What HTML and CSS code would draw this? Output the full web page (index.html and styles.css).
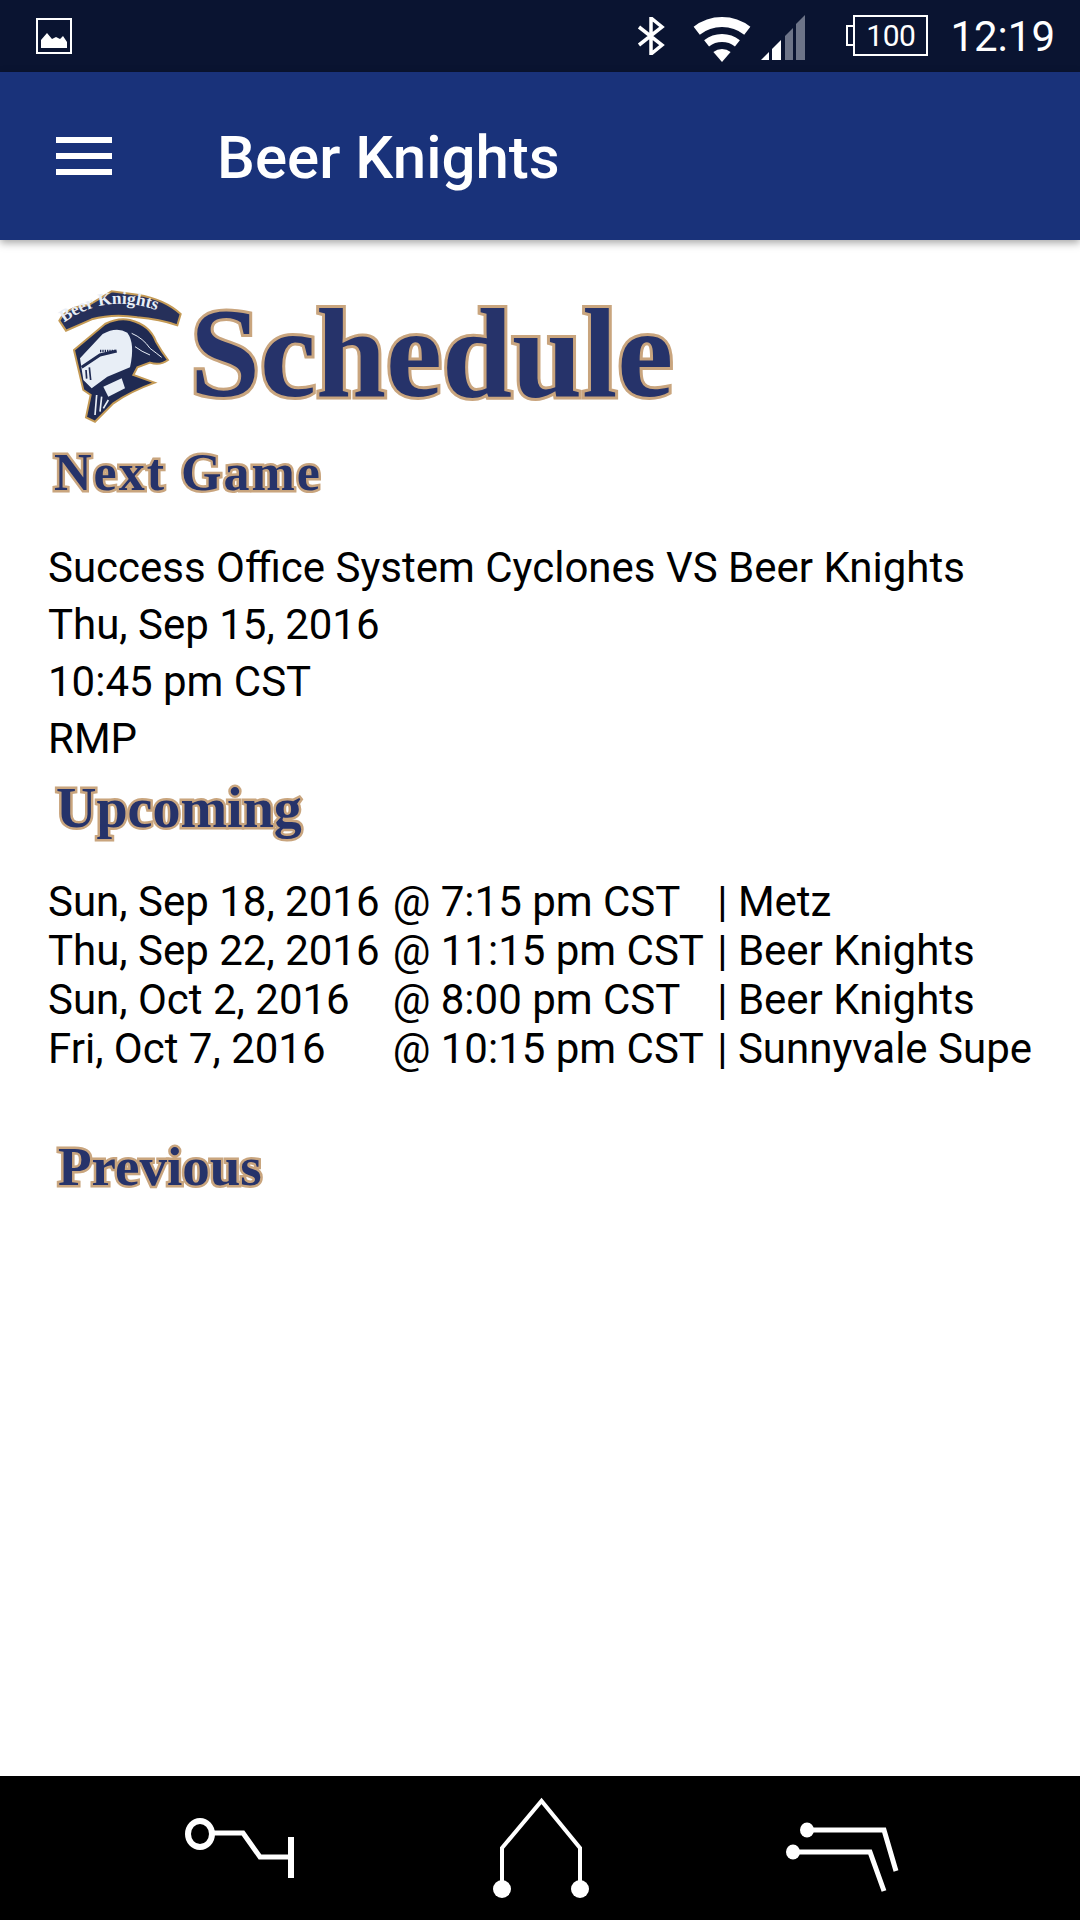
FILE: index.html
```html
<!DOCTYPE html>
<html lang="en">
<head>
    <meta charset="UTF-8">
    <meta name="viewport" content="width=device-width, initial-scale=1.0">
    <title>Beer Knights</title>
    <link rel="stylesheet" href="styles.css">
</head>
<body>
    <div class="status-bar">
        <svg class="status-picture" width="36" height="36" viewBox="0 0 36 36">
            <rect x="1" y="1" width="34" height="34" fill="none" stroke="#fff" stroke-width="2"/>
            <path d="M5 30V22L11 15L16 21L20 19L24 21L27 18L31 24V30Z" fill="#fff"/>
        </svg>
        <svg class="status-bluetooth" width="28" height="38" viewBox="0 0 28 38">
            <path d="M2 10L25 28L14 37V1L25 10L2 28" fill="none" stroke="#fff" stroke-width="3.5"/>
        </svg>
        <svg class="status-wifi" width="60" height="48" viewBox="0 0 60 48">
            <path d="M4.7 15.7A41 41 0 0 1 55.3 15.7" fill="none" stroke="#fff" stroke-width="10"/>
            <path d="M14.6 28.3A25 25 0 0 1 45.4 28.3" fill="none" stroke="#fff" stroke-width="8"/>
            <path d="M30 47L21.4 37A14 14 0 0 1 38.6 37Z" fill="#fff"/>
        </svg>
        <svg class="status-signal" width="44" height="45" viewBox="0 0 44 45">
            <polygon points="0,45 8,37 8,45" fill="#fff"/>
            <polygon points="11,34 20,25 20,45 11,45" fill="#fff"/>
            <polygon points="24,21 32,13 32,45 24,45" fill="#6d7488"/>
            <polygon points="35,9 44,0 44,45 35,45" fill="#6d7488"/>
        </svg>
        <div class="battery">100</div>
        <div class="clock">12:19</div>
    </div>

    <header class="app-bar">
        <div class="menu-icon"><span></span><span></span><span></span></div>
        <div class="app-title">Beer Knights</div>
    </header>

    <main class="content">
        <div class="schedule-head">
            <svg class="logo" width="140" height="150" viewBox="0 0 420 450">
                <defs>
                    <path id="bannerCurve" d="M42 128Q190 20 385 118"/>
                </defs>
                <path d="M28 122Q50 80 115 76L185 34L262 44Q345 58 392 102L382 136Q330 118 262 112Q190 100 125 118L48 152Z" fill="#26305a" stroke="#c49a55" stroke-width="6"/>
                <text class="logo-text"><textPath href="#bannerCurve">Beer Knights</textPath></text>
                <path d="M72 210L165 132Q205 112 240 120Q300 135 318 185Q335 215 354 240Q330 258 300 248L262 262L250 285L314 308Q240 335 190 370Q165 395 135 425L108 412L122 345L100 330Z" fill="#1f2a52" stroke="#c49a55" stroke-width="6"/>
                <path d="M90 235L158 162Q200 138 232 158Q256 190 240 262L172 290L125 325L100 300Z" fill="#e8eef6"/>
                <path d="M95 262L150 225L200 213" fill="none" stroke="#1f2a52" stroke-width="9"/>
                <path d="M150 213H198" fill="none" stroke="#1f2a52" stroke-width="7" stroke-dasharray="4 3"/>
                <path d="M118 262L122 300M108 270L110 296" fill="none" stroke="#1f2a52" stroke-width="5"/>
                <path d="M245 160Q280 175 300 205Q320 220 335 232M255 200Q275 215 300 225" fill="none" stroke="#e8eef6" stroke-width="3"/>
                <path d="M160 320L215 295L225 325L175 350Z" fill="#e8eef6"/>
                <path d="M140 345L135 405M155 350L150 395M175 360L160 385" fill="none" stroke="#e8eef6" stroke-width="5"/>
            </svg>
            <h1 class="title-big">Schedule</h1>
        </div>

        <h2 class="title-small title-next">Next Game</h2>
        <div class="next-game">
            <div>Success Office System Cyclones VS Beer Knights</div>
            <div>Thu, Sep 15, 2016</div>
            <div>10:45 pm CST</div>
            <div>RMP</div>
        </div>

        <h2 class="title-small title-upcoming">Upcoming</h2>
        <table class="upcoming">
            <tr><td class="col-date">Sun, Sep 18, 2016</td><td class="col-time">@ 7:15 pm CST</td><td>| Metz</td></tr>
            <tr><td class="col-date">Thu, Sep 22, 2016</td><td class="col-time">@ 11:15 pm CST</td><td>| Beer Knights</td></tr>
            <tr><td class="col-date">Sun, Oct 2, 2016</td><td class="col-time">@ 8:00 pm CST</td><td>| Beer Knights</td></tr>
            <tr><td class="col-date">Fri, Oct 7, 2016</td><td class="col-time">@ 10:15 pm CST</td><td>| Sunnyvale Supe</td></tr>
        </table>

        <h2 class="title-small title-previous">Previous</h2>
    </main>

    <nav class="nav-bar">
        <svg class="nav-icons" width="1080" height="144" viewBox="0 0 1080 144">
            <g fill="none" stroke="#fff" stroke-width="5">
                <ellipse cx="200" cy="58" rx="12" ry="13" stroke-width="6"/>
                <path d="M213 57H243L260 81H291"/>
                <path d="M291 61V102" stroke-width="6"/>
            </g>
            <g fill="none" stroke="#fff" stroke-width="4">
                <path d="M502 113V72L541.5 25L580 72V113"/>
            </g>
            <circle cx="502" cy="113" r="9" fill="#fff"/>
            <circle cx="580" cy="113" r="9" fill="#fff"/>
            <g fill="none" stroke="#fff" stroke-width="5">
                <path d="M807 54H884L896 95"/>
                <path d="M793 76H870L884 115"/>
            </g>
            <ellipse cx="807" cy="54" rx="7" ry="7.5" fill="#fff"/>
            <ellipse cx="793" cy="76" rx="7" ry="7.5" fill="#fff"/>
        </svg>
    </nav>
</body>
</html>
```

FILE: styles.css
```css
body {
    margin: 0;
    width: 1080px;
    height: 1920px;
    display: flex;
    flex-direction: column;
    background-color: #ffffff;
    font-family: Roboto, sans-serif;
    overflow: hidden;
}
.status-bar {
    height: 72px;
    flex: none;
    display: flex;
    align-items: center;
    background-color: #0a1431;
    color: #ffffff;
}
.status-picture {
    margin-left: 36px;
    margin-right: auto;
}
.status-bluetooth {
    margin-right: 27px;
}
.status-wifi {
    margin-right: 9px;
    margin-top: 6px;
}
.status-signal {
    margin-top: 3px;
    margin-right: 48px;
}
.battery {
    position: relative;
    width: 71px;
    height: 37px;
    margin-top: -2px;
    margin-right: 22px;
    border: 2px solid #ffffff;
    display: flex;
    align-items: center;
    justify-content: center;
    font-size: 30px;
    letter-spacing: -0.5px;
}
.battery::before {
    content: "";
    position: absolute;
    left: -9px;
    top: 8px;
    width: 7px;
    height: 17px;
    border: 2px solid #ffffff;
    border-right: none;
}
.clock {
    margin-right: 25px;
    font-size: 42px;
}
.app-bar {
    height: 168px;
    flex: none;
    display: flex;
    align-items: center;
    background-color: #19327a;
    color: #ffffff;
    box-shadow: 0 3px 8px rgba(0, 0, 0, 0.35);
    position: relative;
}
.menu-icon {
    width: 56px;
    margin-left: 56px;
    display: flex;
    flex-direction: column;
    gap: 10px;
}
.menu-icon span {
    height: 6px;
    background-color: #ffffff;
}
.app-title {
    margin-left: 105px;
    margin-top: 2px;
    font-size: 60px;
    font-weight: 500;
}
.content {
    flex: 1;
    padding: 0 48px;
    color: #000000;
    font-size: 42px;
}
.schedule-head {
    display: flex;
    align-items: center;
    height: 150px;
    margin-top: 40px;
}
.logo {
    flex: none;
    margin-left: 2px;
}
.title-big,
.title-small {
    margin: 0;
    font-family: "Liberation Serif", serif;
    font-weight: bold;
    color: #26336a;
    -webkit-text-stroke: 6px #c9a57e;
    paint-order: stroke fill;
    line-height: 1;
}
.title-big {
    font-size: 126px;
    margin-top: -2px;
}
.title-small {
    -webkit-text-stroke-width: 5px;
}
.title-next {
    margin-left: 6px;
    margin-top: 17px;
    height: 92px;
    font-size: 52px;
    letter-spacing: 2px;
}
.title-upcoming {
    margin-left: 8px;
    margin-top: 13px;
    height: 97px;
    font-size: 56px;
}
.title-previous {
    margin-left: 10px;
    margin-top: 66px;
    font-size: 55px;
}
.next-game {
    line-height: 57px;
}
.upcoming {
    border-collapse: collapse;
    line-height: 49px;
    white-space: nowrap;
}
.upcoming td {
    padding: 0;
}
.col-date {
    width: 346px;
}
.col-time {
    width: 326px;
}
.nav-bar {
    height: 144px;
    flex: none;
    background-color: #000000;
}
.nav-icons {
    display: block;
}
.logo-text {
    font-family: "Liberation Serif", serif;
    font-weight: bold;
    font-size: 52px;
    fill: #e8eef6;
}
```
